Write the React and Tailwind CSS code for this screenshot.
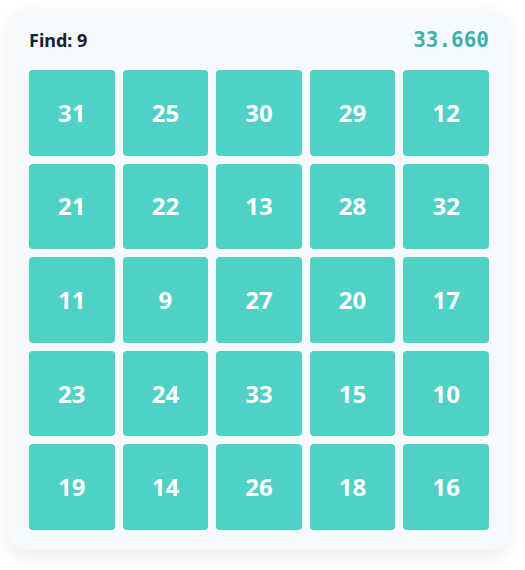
import React from 'react';

const nums = [31, 25, 30, 29, 12, 21, 22, 13, 28, 32, 11, 9, 27, 20, 17, 23, 24, 33, 15, 10, 19, 14, 26, 18, 16];

export default function App() {
  return (
    <div className="min-h-screen bg-white pl-[9px] pt-[10px]" style={{ fontFamily: '"Noto Sans", "Open Sans", sans-serif' }}>
      <div className="w-[500px] rounded-2xl bg-[#f7fafc] p-5 shadow-[0_6px_20px_rgba(0,0,0,0.08)]">
        {/* header */}
        <div className="mb-5 flex h-5 items-center justify-between">
          <span className="text-lg leading-5 font-bold text-[#1a202c]">Find: 9</span>
          <span className="text-[21px] leading-5 font-bold text-[#38b2ac]" style={{ fontFamily: '"DejaVu Sans Mono", monospace' }}>33.660</span>
        </div>
        {/* grid */}
        <div className="grid grid-cols-5 gap-2">
          {nums.map((n) => (
            <div key={n} className="flex aspect-square items-center justify-center rounded bg-[#4fd1c5] text-2xl font-bold text-white">
              {n}
            </div>
          ))}
        </div>
      </div>
    </div>
  );
}
